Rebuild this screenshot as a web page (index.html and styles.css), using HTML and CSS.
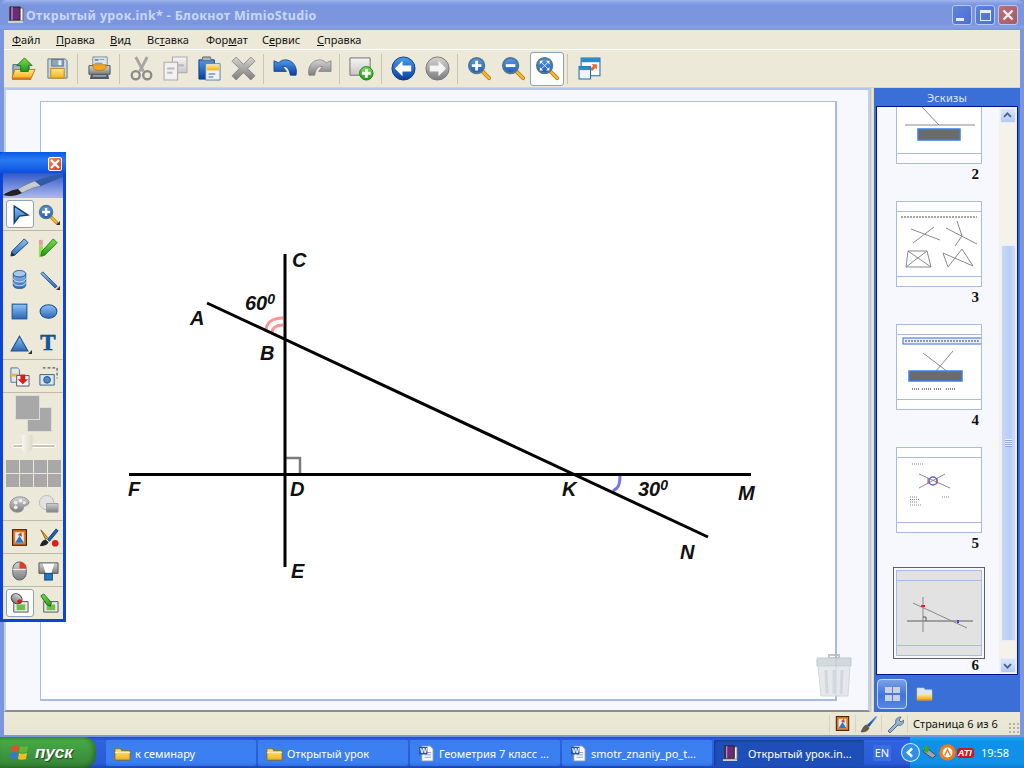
FILE: index.html
```html
<!DOCTYPE html>
<html lang="ru">
<head>
<meta charset="utf-8">
<title>Открытый урок.ink* - Блокнот MimioStudio</title>
<link rel="stylesheet" href="styles.css">
</head>
<body>
<svg class="defs" width="0" height="0" aria-hidden="true">
  <defs>
    <linearGradient id="gBlue" x1="0" y1="0" x2="0" y2="1"><stop offset="0" stop-color="#8fc4f2"/><stop offset="1" stop-color="#2a68b8"/></linearGradient>
    <linearGradient id="gDeep" x1="0" y1="0" x2="0" y2="1"><stop offset="0" stop-color="#4d9bea"/><stop offset="1" stop-color="#0b3f9e"/></linearGradient>
    <linearGradient id="gLens" x1="0" y1="0" x2="0" y2="1"><stop offset="0" stop-color="#5a9fe8"/><stop offset="1" stop-color="#1c57b8"/></linearGradient>
    <linearGradient id="gGray" x1="0" y1="0" x2="0" y2="1"><stop offset="0" stop-color="#d4d4d4"/><stop offset="1" stop-color="#7d7d7d"/></linearGradient>
    <linearGradient id="gGreen" x1="0" y1="0" x2="0" y2="1"><stop offset="0" stop-color="#7ede4a"/><stop offset="1" stop-color="#1f9a18"/></linearGradient>
    <linearGradient id="gYellow" x1="0" y1="0" x2="0" y2="1"><stop offset="0" stop-color="#ffe68a"/><stop offset="1" stop-color="#f3b21a"/></linearGradient>
    <linearGradient id="gPage" x1="0" y1="0" x2="0" y2="1"><stop offset="0" stop-color="#f6f6f6"/><stop offset="1" stop-color="#c6c6c6"/></linearGradient>

    <symbol id="i-open" viewBox="0 0 26 24">
      <path d="M2 8h7l2 2h8v10H2z" fill="#9fb7c9" stroke="#3c6a86"/>
      <path d="M1 22l3-9h21l-4 9z" fill="url(#gYellow)" stroke="#c4720f"/>
      <path d="M1 23h20" stroke="#d9541a" stroke-width="1.5"/>
      <path d="M14 1l8 8h-4v6h-8V9H6z" fill="url(#gGreen)" stroke="#1b7a1b"/>
    </symbol>
    <symbol id="i-save" viewBox="0 0 24 24">
      <path d="M2 2h18l2 2v18H2z" fill="#c9d6e2" stroke="#5d7689"/>
      <rect x="6" y="2.5" width="12" height="7" fill="#8fa6b8" stroke="#5d7689"/>
      <rect x="13" y="3.5" width="3" height="5" fill="#eef3f7"/>
      <rect x="5" y="12" width="14" height="10" fill="url(#gYellow)" stroke="#b98a20"/>
    </symbol>
    <symbol id="i-print" viewBox="0 0 26 26">
      <path d="M6 1h15v9H6z" fill="#dfe7ee" stroke="#7e8c96"/>
      <path d="M8 3h4v2H8zM13 3h5v1h-5zM8 7h8v1H8z" fill="#77848f"/>
      <path d="M2 10h22v9H2z" fill="url(#gGray)" stroke="#4d5a64"/>
      <path d="M6 9h14c0 5-3 6-7 6s-7-1-7-6z" fill="#f2a81d" stroke="#b46a10" stroke-width=".7"/>
      <path d="M4 19h18l1 5H3z" fill="#4d5a64"/>
      <path d="M6 20h14v1.500H6z" fill="#a8b2ba"/>
    </symbol>
    <symbol id="i-cut" viewBox="0 0 24 26">
      <path d="M6 1l8 15M18 1l-8 15" stroke="#a5a5a5" stroke-width="3" fill="none"/>
      <circle cx="6" cy="20" r="4.200" fill="none" stroke="#8a8a8a" stroke-width="2.400"/>
      <circle cx="18" cy="20" r="4.200" fill="none" stroke="#8a8a8a" stroke-width="2.400"/>
    </symbol>
    <symbol id="i-copy" viewBox="0 0 24 24">
      <path d="M9 1h14v15H9z" fill="url(#gPage)" stroke="#a9a9a9"/>
      <path d="M1 6h13v17H1z" fill="#f1f1f1" stroke="#a9a9a9"/>
      <path d="M4 11h7v2H4zM4 15h5v2H4zM14 8h6v2h-6z" fill="#b9b9b9"/>
    </symbol>
    <symbol id="i-paste" viewBox="0 0 24 26">
      <path d="M1 4h16v20H1z" fill="url(#gDeep)" stroke="#0f3c8c"/>
      <path d="M5 1h8l1 4H4z" fill="#aab4bc" stroke="#5a6670"/>
      <path d="M8 8h15v17H8z" fill="#eef2f6" stroke="#5d7f9f"/>
      <path d="M9 9h13v6H9z" fill="url(#gYellow)"/>
      <path d="M11 18h7v1.500h-7zM11 21h5v1.500h-5z" fill="#7f97ab"/>
    </symbol>
    <symbol id="i-del" viewBox="0 0 24 24">
      <path d="M5 1l7 7 7-7 4 4-7 7 7 7-4 4-7-7-7 7-4-4 7-7-7-7z" fill="url(#gGray)" stroke="#767676" stroke-width=".7"/>
    </symbol>
    <symbol id="i-undo" viewBox="0 0 26 22">
      <path d="M1 3V14H14L10 9C14 8 17 11 18 18H24C26 9 20 2 13 2C10 2 8 3 6 5Z" fill="url(#gDeep)" stroke="#0e3d90" stroke-width=".8"/>
    </symbol>
    <symbol id="i-redo" viewBox="0 0 26 22">
      <path d="M25 3V14H12L16 9C12 8 9 11 8 18H2C0 9 6 2 13 2C16 2 18 3 20 5Z" fill="url(#gGray)" stroke="#808080" stroke-width=".8"/>
    </symbol>
    <symbol id="i-new" viewBox="0 0 26 26">
      <path d="M1 2h21v18H1z" fill="url(#gPage)" stroke="#6f6f6f"/>
      <circle cx="18" cy="18" r="7" fill="url(#gGreen)" stroke="#188018"/>
      <path d="M16.500 13.500h3v3h3v3h-3v3h-3v-3h-3v-3h3z" fill="#fff"/>
    </symbol>
    <symbol id="i-back" viewBox="0 0 26 26">
      <circle cx="13" cy="13" r="12" fill="url(#gDeep)" stroke="#0c3b8f"/>
      <path d="M4 13l8-8v5h9v6h-9v5z" fill="#fff"/>
    </symbol>
    <symbol id="i-fwd" viewBox="0 0 26 26">
      <circle cx="13" cy="13" r="12" fill="url(#gGray)" stroke="#777"/>
      <path d="M22 13l-8-8v5H5v6h9v5z" fill="#f4f4f4"/>
    </symbol>
    <symbol id="i-zin" viewBox="0 0 26 26">
      <path d="M15 15l8 8" stroke="#b87512" stroke-width="4" stroke-linecap="round"/>
      <path d="M15 15l8 8" stroke="#f5b733" stroke-width="2.400" stroke-linecap="round"/>
      <circle cx="10" cy="10" r="8" fill="url(#gLens)" stroke="#4f7796" stroke-width="2"/>
      <path d="M8.500 5h3v3.500H15v3h-3.500V15h-3v-3.500H5v-3h3.500z" fill="#fff"/>
    </symbol>
    <symbol id="i-zout" viewBox="0 0 26 26">
      <path d="M15 15l8 8" stroke="#b87512" stroke-width="4" stroke-linecap="round"/>
      <path d="M15 15l8 8" stroke="#f5b733" stroke-width="2.400" stroke-linecap="round"/>
      <circle cx="10" cy="10" r="8" fill="url(#gLens)" stroke="#4f7796" stroke-width="2"/>
      <path d="M5 8.500h10v3H5z" fill="#fff"/>
    </symbol>
    <symbol id="i-zfit" viewBox="0 0 26 26">
      <path d="M15 15l8 8" stroke="#b87512" stroke-width="4" stroke-linecap="round"/>
      <path d="M15 15l8 8" stroke="#f5b733" stroke-width="2.400" stroke-linecap="round"/>
      <circle cx="10" cy="10" r="8" fill="url(#gLens)" stroke="#4f7796" stroke-width="2"/>
      <path d="M5 5h3.500L5 8.500zM15 5v3.500L11.500 5zM5 15v-3.500L8.500 15zM15 15h-3.500L15 11.500z" fill="#fff"/>
      <path d="M6 6l8 8M14 6l-8 8" stroke="#fff" stroke-width=".8"/>
    </symbol>
    <symbol id="i-win" viewBox="0 0 22 22">
      <path d="M3 1h18v17H3z" fill="#fff" stroke="#1f6ba8"/>
      <path d="M3 1h18v4H3z" fill="#2d8acb"/>
      <path d="M13 7h5v5l-1.500-1.500-3 3-2-2 3-3z" fill="#f0662a"/>
      <path d="M1 9h11v12H1z" fill="#eef4f8" stroke="#1f6ba8"/>
      <path d="M1 9h11v3.500H1z" fill="#2d8acb"/>
    </symbol>

    <symbol id="i-arrow" viewBox="0 0 20 20">
      <path d="M5 2l13 8.500-8 1L5 18z" fill="url(#gBlue)" stroke="#123f7d" stroke-width="1.400"/>
    </symbol>
    <symbol id="i-pen" viewBox="0 0 22 22">
      <path d="M16 2l4 4L6 19l-4 1 1-5z" fill="url(#gBlue)" stroke="#203f68"/>
      <path d="M2 20l1-4 3 3z" fill="#222"/>
    </symbol>
    <symbol id="i-marker" viewBox="0 0 22 22">
      <path d="M1 3h4v6H1z" fill="#d8a59e"/>
      <path d="M1 9h4v12H1z" fill="#9adf4a"/>
      <path d="M16 2l4 4L7 19l-4 1 1-5z" fill="url(#gGreen)" stroke="#2b7a1c"/>
    </symbol>
    <symbol id="i-stack" viewBox="0 0 22 22">
      <ellipse cx="11" cy="5" rx="6.500" ry="3.500" fill="#a9c8ea" stroke="#2d5c98"/>
      <path d="M4.500 5v12c0 2 3 3.500 6.500 3.500s6.500-1.500 6.500-3.500V5c0 2-3 3.500-6.500 3.500S4.500 7 4.500 5z" fill="url(#gBlue)" stroke="#2d5c98"/>
      <path d="M4.500 10c0 2 3 3.500 6.500 3.500s6.500-1.500 6.500-3.500M4.500 14c0 2 3 3.500 6.500 3.500s6.500-1.500 6.500-3.500" fill="none" stroke="#dbe8f6"/>
    </symbol>
    <symbol id="i-line" viewBox="0 0 22 22">
      <path d="M3 5l2-2 15 15-2 2z" fill="url(#gBlue)" stroke="#23528e"/>
    </symbol>
    <symbol id="i-rect" viewBox="0 0 20 20">
      <rect x="3" y="3" width="14" height="14" fill="url(#gBlue)" stroke="#1c4f92"/>
    </symbol>
    <symbol id="i-ell" viewBox="0 0 20 20">
      <ellipse cx="10" cy="10" rx="8" ry="6.500" fill="url(#gBlue)" stroke="#1c4f92"/>
    </symbol>
    <symbol id="i-tri" viewBox="0 0 20 20">
      <path d="M10 3l8 14H2z" fill="url(#gBlue)" stroke="#1c4f92"/>
    </symbol>
    <symbol id="i-folddown" viewBox="0 0 22 22">
      <path d="M2 2h7l2 2v13H2z" fill="#dfe6ec" stroke="#52758f"/>
      <path d="M2 8h8v3H2z" fill="#f2b53a"/>
      <path d="M8 10h13v11H8z" fill="#f5f5f5" stroke="#556"/>
      <path d="M12 9h5v5h3l-5.500 5L9 14h3z" fill="#d8201a"/>
    </symbol>
    <symbol id="i-cam" viewBox="0 0 22 22">
      <path d="M5 2h15v11" fill="none" stroke="#333" stroke-dasharray="3 2"/>
      <path d="M2 9h15v11H2z" fill="#dce6ee" stroke="#335f86"/>
      <circle cx="9.500" cy="14.500" r="3.500" fill="#4d8cc6" stroke="#1e4f80"/>
    </symbol>
    <symbol id="i-palette" viewBox="0 0 22 22">
      <path d="M11 3c6 0 10 3 10 6 0 3-5 3-6 5 0 3-2 5-6 5-5 0-8-3-8-7 0-5 4-9 10-9z" fill="url(#gGray)" stroke="#8c8c8c"/>
      <circle cx="7" cy="9" r="2" fill="#eee"/><circle cx="12" cy="7" r="2" fill="#eee"/><circle cx="16" cy="9" r="1.700" fill="#eee"/><circle cx="7" cy="14" r="2" fill="#eee"/>
    </symbol>
    <symbol id="i-shapegray" viewBox="0 0 22 22">
      <circle cx="9" cy="9" r="7.500" fill="#e2e2e2" stroke="#bbb"/>
      <path d="M9 10h12v9H9z" fill="url(#gGray)" stroke="#999"/>
    </symbol>
    <symbol id="i-frame" viewBox="0 0 22 22">
      <rect x="3" y="2" width="16" height="18" fill="#e97a1c" stroke="#4b2408" stroke-width="1.400"/>
      <rect x="6" y="5" width="10" height="12" fill="#dfeefa"/>
      <path d="M6 17l5-8 5 8z" fill="#2b78c4"/><path d="M9 8l4-3 1 5z" fill="#c6402a"/>
    </symbol>
    <symbol id="i-brushes" viewBox="0 0 22 22">
      <path d="M3 3l7 8-2 2z" fill="#f0b52a" stroke="#8a5c10"/>
      <path d="M19 2l-9 11 2 2 9-11z" fill="#1d5fb5" stroke="#103a78"/>
      <path d="M8 13c-4 1-5 4-6 7 4 0 8-1 9-4z" fill="#222"/>
      <circle cx="18" cy="17" r="3.500" fill="#d8201a"/>
    </symbol>
    <symbol id="i-mouse" viewBox="0 0 22 22">
      <rect x="4" y="2" width="14" height="19" rx="7" fill="url(#gGray)" stroke="#4f6070"/>
      <path d="M11 2c4 0 7 2 7 7h-7z" fill="#e13b22"/>
      <path d="M4 10h14" stroke="#f0f0f0"/>
    </symbol>
    <symbol id="i-proj" viewBox="0 0 22 22">
      <path d="M1 3h20v11H1z" fill="url(#gGray)" stroke="#555"/>
      <path d="M5 4h12l-3 10H8z" fill="#fff"/>
      <rect x="7" y="14" width="8" height="7" fill="#1f78c2" stroke="#0e4679"/>
    </symbol>
    <symbol id="i-ink1" viewBox="0 0 22 22">
      <path d="M5 9h15v11H5z" fill="#e8e8e8" stroke="#555"/>
      <path d="M8 12h9v6H8z" fill="#6fc04a"/>
      <ellipse cx="8" cy="6" rx="6" ry="5" transform="rotate(35 8 6)" fill="url(#gGray)" stroke="#445"/>
      <circle cx="11" cy="9" r="2.500" fill="#d8201a"/>
    </symbol>
    <symbol id="i-ink2" viewBox="0 0 22 22">
      <path d="M6 9h15v11H6z" fill="#e8e8e8" stroke="#555"/>
      <path d="M9 12h9v6H9z" fill="#6fc04a"/>
      <path d="M3 3l3-2 8 9-1 4-4-2z" fill="url(#gGreen)" stroke="#1a6a1a"/>
    </symbol>
    <symbol id="i-folder" viewBox="0 0 18 16">
      <path d="M1 3h6l1 2h9v10H1z" fill="url(#gYellow)" stroke="#8c6a1c"/>
      <path d="M1 7h16" stroke="#fff3c0"/>
    </symbol>
    <symbol id="i-word" viewBox="0 0 18 18">
      <path d="M4 1h9l3 3v13H4z" fill="#fff" stroke="#8090a8"/>
      <path d="M7 8h7M7 10.500h7M7 13h7" stroke="#8ea2c0"/>
      <rect x="1" y="2" width="9" height="8" fill="#2a50a8"/>
      <text x="2.200" y="8.700" class="word-w">W</text>
    </symbol>
    <symbol id="i-book" viewBox="0 0 18 18">
      <path d="M3 2h13v13H3z" fill="#f4f0f4" stroke="#666"/>
      <rect x="3" y="1" width="10" height="13" fill="#6a2c78" stroke="#222"/>
      <path d="M5 1v13" stroke="#d0b0d8"/>
      <path d="M1 15h15v2H1z" fill="#d0d0d0"/>
    </symbol>
  </defs>
</svg>

<div class="window">
  <header class="titlebar">
    <svg class="title-icon"><use href="#i-book"/></svg>
    <span class="title-text">Открытый урок.ink* - Блокнот MimioStudio</span>
    <div class="winctl">
      <span class="wbtn"><i class="glyph-min"></i></span>
      <span class="wbtn"><i class="glyph-max"></i></span>
      <span class="wbtn wbtn-close"><svg viewBox="0 0 12 12" class="glyph-x"><path d="M1.500 1.500l9 9M10.500 1.500l-9 9"/></svg></span>
    </div>
  </header>

  <nav class="menubar">
    <span class="m m1"><u>Ф</u>айл</span>
    <span class="m m2"><u>П</u>равка</span>
    <span class="m m3"><u>В</u>ид</span>
    <span class="m m4">Вс<u>т</u>авка</span>
    <span class="m m5">Фор<u>м</u>ат</span>
    <span class="m m6">С<u>е</u>рвис</span>
    <span class="m m7"><u>С</u>правка</span>
  </nav>

  <div class="toolbar">
    <span class="tb"><svg class="ic24"><use href="#i-open"/></svg></span>
    <span class="tb"><svg class="ic22"><use href="#i-save"/></svg></span>
    <span class="tsep"></span>
    <span class="tb"><svg class="ic24"><use href="#i-print"/></svg></span>
    <span class="tsep"></span>
    <span class="tb"><svg class="ic24"><use href="#i-cut"/></svg></span>
    <span class="tb"><svg class="ic24"><use href="#i-copy"/></svg></span>
    <span class="tb"><svg class="ic24"><use href="#i-paste"/></svg></span>
    <span class="tb"><svg class="ic24"><use href="#i-del"/></svg></span>
    <span class="tsep"></span>
    <span class="tb"><svg class="ic24"><use href="#i-undo"/></svg></span>
    <span class="tb"><svg class="ic24"><use href="#i-redo"/></svg></span>
    <span class="tsep"></span>
    <span class="tb"><svg class="ic24"><use href="#i-new"/></svg></span>
    <span class="tsep"></span>
    <span class="tb"><svg class="ic24"><use href="#i-back"/></svg></span>
    <span class="tb"><svg class="ic24"><use href="#i-fwd"/></svg></span>
    <span class="tsep"></span>
    <span class="tb"><svg class="ic24"><use href="#i-zin"/></svg></span>
    <span class="tb"><svg class="ic24"><use href="#i-zout"/></svg></span>
    <span class="tb tb-on"><svg class="ic24"><use href="#i-zfit"/></svg></span>
    <span class="tsep"></span>
    <span class="tb"><svg class="ic22"><use href="#i-win"/></svg></span>
  </div>

  <main class="main">
    <section class="workspace">
      <div class="page">
        <svg class="drawing" viewBox="40 101 796 597" width="796" height="597">
          <path d="M266 331c0-8 6-13 17-13" class="arc-red"/>
          <path d="M272 333c0-5 4-8 11-8" class="arc-red"/>
          <path d="M285 458h15v16" class="right-mark"/>
          <path d="M620 475c0 6-1 11-3 13l-4 3" class="arc-blue"/>
          <path d="M285 254v313M207 303L708 537M129 474.500H751" class="geo"/>
          <text x="292" y="267" class="lbl">C</text>
          <text x="190" y="325" class="lbl">A</text>
          <text x="260" y="360" class="lbl">B</text>
          <text x="245" y="310" class="lbl">60<tspan class="sup" dy="-6">0</tspan></text>
          <text x="290" y="496" class="lbl">D</text>
          <text x="128" y="496" class="lbl">F</text>
          <text x="562" y="496" class="lbl">K</text>
          <text x="638" y="496" class="lbl">30<tspan class="sup" dy="-6">0</tspan></text>
          <text x="738" y="500" class="lbl">M</text>
          <text x="680" y="559" class="lbl">N</text>
          <text x="291" y="578" class="lbl">E</text>
        </svg>
      </div>
      <svg class="trash" viewBox="0 0 36 46">
        <path d="M13 3h10v3H13z" fill="none" stroke="#b4bdc3" stroke-width="2"/>
        <path d="M1 6h34v8H1z" fill="#ccd3d8" stroke="#b7c0c6"/>
        <path d="M2 14h32l-2 30H5z" fill="#e2e6e9" stroke="#cbd2d6"/>
        <path d="M10 18l1 24M18 18v24M26 18l-1 24" stroke="#cbd2d7" stroke-width="3"/>
      </svg>
    </section>
    <div class="splitter"></div>
    <aside class="panel">
      <div class="panel-head">Эскизы</div>
      <div class="thumbs">
        <div class="thumb-scroll">
          <figure class="item">
            <div class="thumb"><svg class="thumb-art" viewBox="1 1 84 64">
              <path d="M26 19l17 18M9 37h70" class="t-line"/><rect x="22" y="41" width="42" height="11" fill="#6b6b6b" stroke="#3a7ee8" stroke-width="1.500"/>
            </svg></div>
            <figcaption>2</figcaption>
          </figure>
          <figure class="item">
            <div class="thumb"><svg class="thumb-art" viewBox="1 1 84 64">
              <path d="M5 6h76" stroke="#888" stroke-width="1.300" stroke-dasharray="2 1"/>
              <path d="M15 18l29 11M38 16L17 32M50 17l31 16M61 10l5 15-7 10" class="t-line"/>
              <path d="M12 40h19l4 16H10zM12 40l23 16M31 40L10 56M47 42l5 14 14-18 11 17z" class="t-line"/>
            </svg></div>
            <figcaption>3</figcaption>
          </figure>
          <figure class="item">
            <div class="thumb"><svg class="thumb-art" viewBox="1 1 84 64">
              <rect x="7" y="4" width="79" height="6" fill="#eef" stroke="#2e6fe0"/>
              <path d="M9 7h74" stroke="#778" stroke-width="1.500" stroke-dasharray="2 1"/>
              <path d="M27 19l25 19M57 17L40 37" class="t-line"/>
              <rect x="13" y="37" width="53" height="10" fill="#6b6b6b" stroke="#3a7ee8" stroke-width="1.500"/>
              <path d="M16 55h7M26 55h10M38 55h8M50 55h9" stroke="#888" stroke-width="2" stroke-dasharray="1 1"/>
            </svg></div>
            <figcaption>4</figcaption>
          </figure>
          <figure class="item">
            <div class="thumb"><svg class="thumb-art" viewBox="1 1 84 64">
              <path d="M16 7h12M46 40h8M14 40h8M14 42.500h10M14 45h7M14 48h12" stroke="#888" stroke-dasharray="1 1"/>
              <path d="M23 17l31 14M49 17L23 31" class="t-line"/>
              <circle cx="37" cy="24" r="4" fill="none" stroke="#5566e8" stroke-width="1.500"/>
              <path d="M32 21v6M41 21v6" stroke="#e04040"/>
            </svg></div>
            <figcaption>5</figcaption>
          </figure>
          <figure class="item item-on">
            <div class="thumb"><svg class="thumb-art" viewBox="1 1 84 64">
              <path d="M27 17v35M17 23l54 25" class="t-line"/>
              <path d="M11 41h66" stroke="#888" stroke-width="1.500"/>
              <path d="M25 26h4" stroke="#e22" stroke-width="2"/>
              <path d="M62 40v3" stroke="#44e" stroke-width="2"/>
              <path d="M27 37h3v4" fill="none" stroke="#555"/>
            </svg></div>
            <figcaption>6</figcaption>
          </figure>
        </div>
        <div class="scrollbar">
          <span class="sb-btn"><svg viewBox="0 0 15 15"><path d="M3.500 9l4-4 4 4" class="sb-chev"/></svg></span>
          <div class="sb-track">
            <div class="sb-thumb"><span class="sb-grip"></span></div>
          </div>
          <span class="sb-btn"><svg viewBox="0 0 15 15"><path d="M3.500 6l4 4 4-4" class="sb-chev"/></svg></span>
        </div>
      </div>
      <div class="panel-foot">
        <span class="view-btn"><span class="grid4"><i></i><i></i><i></i><i></i></span></span>
        <svg class="foot-folder" viewBox="0 0 18 16">
          <path d="M1 2h7l2 2h7v11H1z" fill="#dfe7ee" stroke="#b7c4d0" stroke-width=".6"/>
          <path d="M1 9h16v5H1z" fill="url(#gYellow)"/><path d="M1 14h16v1.500H1z" fill="#e08f1a"/>
        </svg>
      </div>
    </aside>
  </main>

  <footer class="status">
    <span class="st-cell"><svg class="ic16"><use href="#i-frame"/></svg></span>
    <span class="st-cell"><svg class="ic18" viewBox="0 0 18 18">
      <path d="M16 1l1 1-8 10-2-2z" fill="url(#gDeep)"/><path d="M7 10c-3 0-4 3-6 7 4 0 7-1 8-4z" fill="#6c5a40" stroke="#333" stroke-width=".5"/>
    </svg></span>
    <span class="st-cell"><svg class="ic18" viewBox="0 0 18 18">
      <path d="M2 16l8-8c-1-3 1-6 5-6l-2 3 2 2 3-2c0 4-3 6-6 5l-8 8z" fill="#9db6d0" stroke="#4c6a8c"/>
    </svg></span>
    <span class="st-text">Страница 6 из 6</span>
    <span class="gripper"></span>
  </footer>
</div>

<aside class="palette">
  <div class="pal-title"><span class="pal-close"><svg viewBox="0 0 12 12" class="glyph-x"><path d="M2 2l8 8M10 2l-8 8"/></svg></span></div>
  <div class="pal-brush"><svg viewBox="0 0 60 24" width="60" height="24">
    <path d="M0 22c3-2 8-5 15-6l4 4c-6 3-12 4-19 2z" fill="#222"/>
    <path d="M15 16c5-3 11-6 17-8l6 5c-7 1-13 4-19 7z" fill="#c7ccd2" stroke="#666" stroke-width=".5"/>
    <path d="M32 8c8-3 18-6 28-7v3c-8 3-15 6-22 9z" fill="#2f5ba8"/>
  </svg></div>
  <div class="pal-sect">
    <span class="pb pb-on"><svg class="ic20"><use href="#i-arrow"/></svg></span>
    <span class="pb more"><svg class="ic20"><use href="#i-zin"/></svg></span>
  </div>
  <div class="pal-sect">
    <span class="pb"><svg class="ic20"><use href="#i-pen"/></svg></span>
    <span class="pb"><svg class="ic20"><use href="#i-marker"/></svg></span>
    <span class="pb"><svg class="ic20"><use href="#i-stack"/></svg></span>
    <span class="pb more"><svg class="ic20"><use href="#i-line"/></svg></span>
    <span class="pb"><svg class="ic20"><use href="#i-rect"/></svg></span>
    <span class="pb"><svg class="ic20"><use href="#i-ell"/></svg></span>
    <span class="pb more"><svg class="ic20"><use href="#i-tri"/></svg></span>
    <span class="pb"><span class="t-tool">T</span></span>
  </div>
  <div class="pal-sect">
    <span class="pb"><svg class="ic20"><use href="#i-folddown"/></svg></span>
    <span class="pb"><svg class="ic20"><use href="#i-cam"/></svg></span>
  </div>
  <div class="pal-sect pal-colors">
    <div class="swatches"><i class="sw sw-a"></i><i class="sw sw-b"></i></div>
    <div class="slider"><i class="slider-knob"></i></div>
    <div class="colorgrid"><i></i><i></i><i></i><i></i><i></i><i></i><i></i><i></i></div>
    <span class="pb"><svg class="ic20"><use href="#i-palette"/></svg></span>
    <span class="pb"><svg class="ic20"><use href="#i-shapegray"/></svg></span>
  </div>
  <div class="pal-sect">
    <span class="pb"><svg class="ic18p"><use href="#i-frame"/></svg></span>
    <span class="pb"><svg class="ic20"><use href="#i-brushes"/></svg></span>
  </div>
  <div class="pal-sect">
    <span class="pb"><svg class="ic20"><use href="#i-mouse"/></svg></span>
    <span class="pb"><svg class="ic20"><use href="#i-proj"/></svg></span>
  </div>
  <div class="pal-sect pal-last">
    <span class="pb pb-on"><svg class="ic20"><use href="#i-ink1"/></svg></span>
    <span class="pb"><svg class="ic20"><use href="#i-ink2"/></svg></span>
  </div>
</aside>

<footer class="taskbar">
  <div class="start">
    <svg class="winlogo" viewBox="0 0 20 20">
      <path d="M2 3c2-1 4-1 7 0l-1 6c-3-1-5-1-7 0z" fill="#e0502a"/>
      <path d="M10 3c2 1 5 1 8 0l-1 6c-3 1-6 1-8 0z" fill="#63b43a"/>
      <path d="M1 10c2-1 4-1 7 0l-1 6c-3-1-5-1-7 0z" fill="#3a76d8"/>
      <path d="M9 10c2 1 5 1 8 0l-1 6c-3 1-6 1-8 0z" fill="#f0c020"/>
    </svg>
    <span class="start-text">пуск</span>
  </div>
  <div class="tasks">
    <span class="task"><svg class="ic16"><use href="#i-folder"/></svg><span class="task-text">к семинару</span></span>
    <span class="task"><svg class="ic16"><use href="#i-folder"/></svg><span class="task-text">Открытый урок</span></span>
    <span class="task"><svg class="ic16"><use href="#i-word"/></svg><span class="task-text">Геометрия 7 класс ...</span></span>
    <span class="task"><svg class="ic16"><use href="#i-word"/></svg><span class="task-text">smotr_znaniy_po_t...</span></span>
    <span class="task task-on"><svg class="ic16"><use href="#i-book"/></svg><span class="task-text">Открытый урок.in...</span></span>
  </div>
  <span class="lang">EN</span>
  <div class="tray">
    <span class="tray-back"><svg viewBox="0 0 18 18"><circle cx="9" cy="9" r="8.500" fill="#2f8ee8" stroke="#d8ecff"/><path d="M10.500 5l-4 4 4 4" fill="none" stroke="#fff" stroke-width="2.400"/></svg></span>
    <svg class="ic16" viewBox="0 0 18 18"><path d="M2 8l10 7 4-3-9-7z" fill="#9aa8b4" stroke="#445"/><path d="M5 1l5 4H8v4H4V5H2z" fill="#3aa82a"/></svg>
    <svg class="ic16" viewBox="0 0 18 18"><circle cx="9" cy="9" r="7" fill="#fff" stroke="#f07a1a" stroke-width="3.500"/><path d="M6 12l3-6 3 6" fill="none" stroke="#f07a1a" stroke-width="1.500"/></svg>
    <span class="ati">ATI</span>
    <span class="clock">19:58</span>
  </div>
</footer>
</body>
</html>
```

FILE: styles.css
```css
* { box-sizing: border-box; }
html, body { margin: 0; padding: 0; }
body {
  width: 1024px;
  height: 768px;
  overflow: hidden;
  position: relative;
  display: flex;
  flex-direction: column;
  font-family: "Noto Sans", "Open Sans", sans-serif;
  font-size: 11px;
  background: #2a5bd7;
}
.defs { position: absolute; }
svg { display: block; }
figure { margin: 0; }

/* sizes of icons */
.ic24 { width: 25px; height: 25px; }
.ic22 { width: 23px; height: 23px; }
.ic20 { width: 21px; height: 21px; }
.ic18p { width: 19px; height: 19px; }
.ic18 { width: 18px; height: 18px; }
.ic16 { width: 17px; height: 17px; flex: none; }

/* window */
.window {
  height: 737px;
  display: flex;
  flex-direction: column;
  background: #7b96df;
  padding: 0 4px 2px;
  flex: none;
}
.titlebar {
  height: 30px;
  margin: 0 -4px;
  padding: 0 7px 0 7px;
  display: flex;
  align-items: center;
  background: linear-gradient(#a2b6ee 0, #8ea6e6 2px, #7b96df 5px, #7b96df 24px, #85a0e8 27px, #7b96df 30px);
  border-radius: 7px 7px 0 0;
}
.title-icon { width: 18px; height: 18px; margin-right: 1px; }
.title-text {
  font-family: "Noto Sans", sans-serif;
  font-weight: 700;
  font-size: 12.500px;
  letter-spacing: .32px;
  color: #c9d6f6;
}
.winctl { margin-left: auto; display: flex; gap: 3px; margin-right: -1px; }
.wbtn {
  width: 20px;
  height: 20px;
  border: 1px solid #b9c9f2;
  border-radius: 3px;
  background: linear-gradient(135deg, #5e83dc, #4c6fd4);
  position: relative;
  display: flex;
  align-items: center;
  justify-content: center;
}
.wbtn-close { background: linear-gradient(135deg, #ba6e78, #a75a68); }
.glyph-min { width: 8px; height: 3px; background: #e6ecfa; margin: 9px 5px 0 0; }
.glyph-max { width: 11px; height: 11px; border: 1px solid #e6ecfa; border-top-width: 3px; }
.glyph-x { width: 12px; height: 12px; }
.glyph-x path { stroke: #f4ecec; stroke-width: 2.400; fill: none; }

/* menu */
.menubar {
  height: 20px;
  background: #ece9d8;
  border-bottom: 1px solid #fff;
  display: flex;
  align-items: center;
  color: #111;
  padding-bottom: 1px;
  font-size: 11px;
}
.m { display: block; }
.m1 { margin-left: 8px; width: 44px; }
.m2 { width: 54px; }
.m3 { width: 37px; }
.m4 { width: 59px; }
.m5 { width: 56px; }
.m6 { width: 55px; }
.m7 { width: 60px; }

/* toolbar */
.toolbar {
  height: 38px;
  background: #ece9d8;
  border-bottom: 1px solid #d8d4c0;
  padding-left: 2px;
  display: flex;
  align-items: center;
}
.tb {
  width: 34px;
  height: 34px;
  display: flex;
  align-items: center;
  justify-content: center;
  border-radius: 3px;
}
.tb-on {
  background: #fdfdfb;
  border: 1px solid #8ba4be;
}
.tsep {
  width: 1px;
  height: 30px;
  margin: 0 4px 0 3px;
  background: #c9c6b4;
}

/* main */
.main { flex: 1; min-height: 0; display: flex; }
.workspace {
  flex: 1;
  min-width: 0;
  position: relative;
  background: #f6f8fe;
  border-top: 2px solid #b4c6f0;
  border-left: 2px solid #c2d0f0;
  border-right: 2px solid #c2d0f0;
  border-bottom: 2px solid #8d8d8d;
  padding: 11px 0 0 34px;
}
.page {
  width: 797px;
  height: 600px;
  background: #fff;
  border: 2px solid #a7bbe8;
  border-left-width: 1px;
  border-top-width: 1px;
  overflow: hidden;
}
.drawing { margin: -1px 0 0 -1px; }
.geo { stroke: #000; stroke-width: 3; fill: none; }
.right-mark { stroke: #7b7b7b; stroke-width: 2.500; fill: none; }
.arc-red { stroke: #fd9494; stroke-width: 3; fill: none; }
.arc-blue { stroke: #7474f0; stroke-width: 3; fill: none; }
.lbl {
  font-family: "Liberation Sans", Arial, sans-serif;
  font-style: italic;
  font-weight: 700;
  font-size: 20px;
  fill: #111;
}
.sup { font-size: 14px; }
.trash {
  position: absolute;
  left: 810px;
  top: 562px;
  width: 36px;
  height: 46px;
  opacity: .85;
}

.splitter {
  width: 4px;
  background: linear-gradient(90deg, #c4bfa6, #ece9d8 60%, #d8d4c0);
}

/* thumbs panel */
.panel {
  width: 146px;
  background: #3a6fd8;
  display: flex;
  flex-direction: column;
}
.panel-head {
  height: 18px;
  line-height: 19px;
  text-align: center;
  color: #dfe8fb;
  font-size: 11px;
  letter-spacing: .2px;
}
.thumbs {
  height: 569px;
  margin: 0 2px;
  background: #f6f8fd;
  border: 1px solid #00138c;
  display: flex;
  overflow: hidden;
}
.thumb-scroll { flex: 1; min-width: 0; height: 100%; overflow: hidden; padding: 0 0 0 19px; }
.item { width: 86px; height: 123px; position: relative; }
.item:first-child { margin-top: -29px; }
.thumb {
  width: 86px;
  height: 86px;
  border: 1px solid #a7bce4;
  background: #fff;
  position: relative;
  padding: 9px 0;
}
.thumb-art {
  width: 84px;
  height: 66px;
  border-top: 1px solid #a7bce4;
  border-bottom: 1px solid #a7bce4;
}
.t-line { stroke: #8a8a8a; stroke-width: 1; fill: none; }
.item figcaption {
  position: absolute;
  right: 3px;
  top: 88px;
  font-family: "Liberation Serif", serif;
  font-weight: 700;
  font-size: 15px;
  color: #111;
  line-height: 17px;
}
.item-on .thumb {
  background: #e2e2e2;
  outline: 1px solid #5f5f5f;
  outline-offset: 2px;
}
.item-on figcaption { top: 87px; }

.scrollbar {
  width: 18px;
  flex: none;
  display: flex;
  flex-direction: column;
  background: #f4f2ea;
  padding: 1px;
}
.sb-btn {
  height: 15px;
  flex: none;
  border: 1px solid #e6eefb;
  border-radius: 2px;
  background: linear-gradient(#dbe6fb, #b4c9f4);
}
.sb-btn svg { width: 13px; height: 13px; }
.sb-chev { fill: none; stroke: #4d6185; stroke-width: 2; }
.sb-track { flex: 1; min-height: 0; padding-top: 122px; padding-bottom: 17px; }
.sb-thumb {
  height: 396px;
  margin: 0 0 0 1px;
  border: 1px solid #e8effc;
  border-radius: 2px;
  background: linear-gradient(90deg, #c8d8f8, #b9cdf6 60%, #cfdcf8);
  display: flex;
  align-items: center;
  justify-content: center;
}
.sb-grip {
  width: 7px;
  height: 8px;
  background: repeating-linear-gradient(#eef3fd 0 1px, #8aa6e0 1px 2px);
}

.panel-foot {
  flex: 1;
  display: flex;
  align-items: center;
  padding: 0 0 0 3px;
}
.view-btn {
  width: 30px;
  height: 30px;
  border: 1px solid #c7d8f6;
  border-radius: 4px;
  background: linear-gradient(#7ba0e8, #3f74d8 55%, #5686e0);
  display: flex;
  align-items: center;
  justify-content: center;
}
.grid4 { display: grid; grid-template-columns: 7px 7px; grid-template-rows: 6px 6px; gap: 2px 1px; }
.grid4 i { background: #c9d2e0; }
.foot-folder { width: 17px; height: 15px; margin-left: 9px; }

/* status */
.status {
  height: 23px;
  background: linear-gradient(#ece9d8, #e8e5d2);
  display: flex;
  align-items: center;
  color: #111;
  font-size: 11px;
  flex: none;
  padding-left: 825px;
  position: relative;
}
.st-cell {
  width: 26px;
  height: 18px;
  border-left: 1px solid #d8d4c0;
  display: flex;
  align-items: center;
  justify-content: center;
}
.st-text {
  border-left: 1px solid #d8d4c0;
  padding-left: 5px;
  height: 18px;
  line-height: 17px;
  white-space: nowrap;
}
.gripper {
  position: absolute;
  right: 0;
  bottom: 1px;
  width: 11px;
  height: 11px;
  background-image: radial-gradient(circle at 1px 1px, #b5b29f 1px, transparent 1.300px);
  background-size: 4px 4px;
}

/* palette */
.palette {
  position: absolute;
  left: 0;
  top: 152px;
  width: 66px;
  height: 470px;
  background: #ece9d8;
  border: 3px solid #0c43d8;
  border-top: 0;
  display: flex;
  flex-direction: column;
}
.pal-title {
  flex: none;
  height: 21px;
  margin: 0 -3px;
  background: linear-gradient(#0a5ae8, #2a7af2 40%, #0a4fe0);
  display: flex;
  justify-content: flex-end;
  align-items: flex-end;
  padding: 0 4px 2px 0;
  border-radius: 3px 3px 0 0;
}
.pal-close {
  width: 14px;
  height: 14px;
  background: linear-gradient(135deg, #f08a60, #d83c1c);
  border: 1px solid #fff;
  border-radius: 2px;
  display: flex;
  align-items: center;
  justify-content: center;
}
.pal-close .glyph-x path { stroke: #fff; }
.pal-brush {
  flex: none;
  height: 24px;
  background: linear-gradient(#2f58c8, #aab6ea);
}
.pal-sect {
  display: grid;
  grid-template-columns: 29px 28px;
  grid-auto-rows: 32px;
  padding: 0 1px 0 2px;
  border-top: 1px solid #bdbaa8;
  flex: none;
  justify-items: center;
  align-items: center;
}
.pal-colors { height: 128px; padding-top: 2px; grid-auto-rows: auto; align-content: start; }
.pal-last { flex: 1; }
.pb {
  width: 28px;
  height: 28px;
  display: flex;
  align-items: center;
  justify-content: center;
  position: relative;
  border-radius: 3px;
}
.pb-on { background: #fdfdfb; border: 1px solid #8ba4be; }
.more::after {
  content: "";
  position: absolute;
  right: 2px;
  bottom: 3px;
  border: 2px solid transparent;
  border-right-color: #333;
  border-bottom-color: #333;
}
.t-tool {
  font-family: "Liberation Serif", serif;
  font-weight: 700;
  font-size: 23px;
  line-height: 24px;
  color: #0f5aa6;
  -webkit-text-stroke: .5px #083c78;
}
.swatches { grid-column: 1 / 3; width: 38px; height: 38px; position: relative; }
.sw { position: absolute; width: 25px; height: 25px; background: #a8a8a8; border: 1px solid #dcdcd8; }
.sw-a { left: 0; top: 0; z-index: 1; }
.sw-b { left: 12px; top: 12px; }
.slider {
  grid-column: 1 / 3;
  width: 44px;
  height: 4px;
  margin: 11px 0 12px;
  background: #c8c5b4;
  border: 1px solid #fff;
  border-radius: 2px;
  position: relative;
}
.slider-knob {
  position: absolute;
  left: 9px;
  top: -10px;
  width: 11px;
  height: 20px;
  background: linear-gradient(90deg, #f6f5ee, #dcd9c8);
  clip-path: polygon(0 0, 100% 0, 100% 70%, 50% 100%, 0 70%);
}
.colorgrid {
  grid-column: 1 / 3;
  width: 55px;
  display: grid;
  grid-template-columns: repeat(4, 13px);
  grid-auto-rows: 13px;
  gap: 1px;
  margin-bottom: 3px;
}
.colorgrid i { background: #a8a8a8; }

/* taskbar */
.taskbar {
  flex: 1;
  display: flex;
  align-items: stretch;
  background: linear-gradient(#1f4fc8, #2e62e0 12%, #2a5bd7 85%, #1c44b0);
  color: #fff;
  font-size: 11px;
  position: relative;
}
.start {
  width: 96px;
  flex: none;
  display: flex;
  align-items: center;
  padding-left: 10px;
  background: linear-gradient(#3f9a3f, #46a846 12%, #3a8c3a 80%, #2e7a2e);
  border-radius: 0 12px 12px 0;
  box-shadow: inset -3px 0 4px rgba(0, 0, 0, .25);
}
.winlogo { width: 20px; height: 20px; margin-right: 5px; }
.start-text {
  font-family: "Liberation Sans", sans-serif;
  font-size: 17px;
  font-weight: 700;
  font-style: italic;
  text-shadow: 1px 1px 1px #1c4a1c;
}
.tasks { display: flex; gap: 2px; padding: 3px 0 2px 10px; }
.task {
  width: 150px;
  display: flex;
  align-items: center;
  gap: 3px;
  padding: 0 4px 0 8px;
  background: linear-gradient(#3c7ef0, #3a80f2 85%, #3270e0);
  border-radius: 2px;
  white-space: nowrap;
  overflow: hidden;
}
.task-text { margin-left: 1px; }
.task-on {
  background: #1e4fb8;
  box-shadow: inset 1px 1px 2px #123a90;
}
.task-on .task-text { margin-left: 6px; }
.word-w { font-family: "Liberation Sans", sans-serif; font-size: 8px; font-weight: 700; fill: #fff; }
.lang {
  width: 18px;
  flex: none;
  margin-left: 9px;
  align-self: center;
  background: #3a6ee0;
  font-size: 11px;
  line-height: 16px;
  text-align: center;
}
.tray {
  flex: 1;
  margin-left: 19px;
  display: flex;
  align-items: center;
  gap: 1px;
  background: linear-gradient(#17a8ee, #1090e8 15%, #1090e8 85%, #0e7cd0);
  position: relative;
}
.tray-back { width: 19px; height: 19px; margin-left: -9px; flex: none; }
.tray-back svg { width: 19px; height: 19px; }
.ati {
  font-family: "Liberation Sans", sans-serif;
  font-style: italic;
  font-weight: 700;
  font-size: 9px;
  background: #d0161c;
  padding: 0 1px;
  border-radius: 3px;
  line-height: 10px;
  width: 17px;
  flex: none;
}
.clock { margin-left: 6px; }
```
